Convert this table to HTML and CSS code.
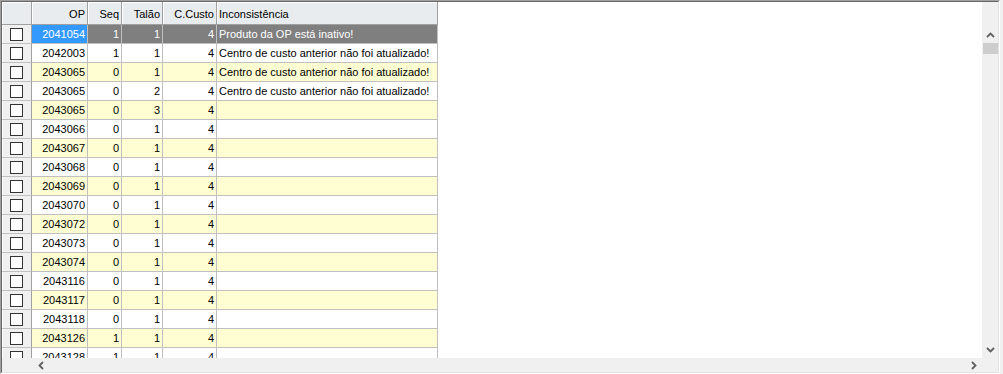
FILE: index.html
```html
<!DOCTYPE html>
<html>
<head>
<meta charset="utf-8">
<link rel="stylesheet" href="styles.css">
</head>
<body>
<div class="frame">
  <div class="inner">
    <div class="viewport">
      <table class="grid">
        <colgroup>
          <col class="c-chk"><col class="c-op"><col class="c-seq"><col class="c-tal"><col class="c-cc"><col class="c-inc">
        </colgroup>
        <thead>
          <tr>
            <th class="ind"></th><th class="num">OP</th><th class="num">Seq</th><th class="num">Talão</th><th class="num">C.Custo</th><th class="txt">Inconsistência</th>
          </tr>
        </thead>
        <tbody>
          <tr class="sel"><td class="ind"><span class="cb"></span></td><td class="num cur">2041054</td><td class="num">1</td><td class="num">1</td><td class="num">4</td><td class="txt">Produto da OP está inativo!</td></tr>
          <tr><td class="ind"><span class="cb"></span></td><td class="num">2042003</td><td class="num">1</td><td class="num">1</td><td class="num">4</td><td class="txt">Centro de custo anterior não foi atualizado!</td></tr>
          <tr class="alt"><td class="ind"><span class="cb"></span></td><td class="num">2043065</td><td class="num">0</td><td class="num">1</td><td class="num">4</td><td class="txt">Centro de custo anterior não foi atualizado!</td></tr>
          <tr><td class="ind"><span class="cb"></span></td><td class="num">2043065</td><td class="num">0</td><td class="num">2</td><td class="num">4</td><td class="txt">Centro de custo anterior não foi atualizado!</td></tr>
          <tr class="alt"><td class="ind"><span class="cb"></span></td><td class="num">2043065</td><td class="num">0</td><td class="num">3</td><td class="num">4</td><td class="txt"></td></tr>
          <tr><td class="ind"><span class="cb"></span></td><td class="num">2043066</td><td class="num">0</td><td class="num">1</td><td class="num">4</td><td class="txt"></td></tr>
          <tr class="alt"><td class="ind"><span class="cb"></span></td><td class="num">2043067</td><td class="num">0</td><td class="num">1</td><td class="num">4</td><td class="txt"></td></tr>
          <tr><td class="ind"><span class="cb"></span></td><td class="num">2043068</td><td class="num">0</td><td class="num">1</td><td class="num">4</td><td class="txt"></td></tr>
          <tr class="alt"><td class="ind"><span class="cb"></span></td><td class="num">2043069</td><td class="num">0</td><td class="num">1</td><td class="num">4</td><td class="txt"></td></tr>
          <tr><td class="ind"><span class="cb"></span></td><td class="num">2043070</td><td class="num">0</td><td class="num">1</td><td class="num">4</td><td class="txt"></td></tr>
          <tr class="alt"><td class="ind"><span class="cb"></span></td><td class="num">2043072</td><td class="num">0</td><td class="num">1</td><td class="num">4</td><td class="txt"></td></tr>
          <tr><td class="ind"><span class="cb"></span></td><td class="num">2043073</td><td class="num">0</td><td class="num">1</td><td class="num">4</td><td class="txt"></td></tr>
          <tr class="alt"><td class="ind"><span class="cb"></span></td><td class="num">2043074</td><td class="num">0</td><td class="num">1</td><td class="num">4</td><td class="txt"></td></tr>
          <tr><td class="ind"><span class="cb"></span></td><td class="num">2043116</td><td class="num">0</td><td class="num">1</td><td class="num">4</td><td class="txt"></td></tr>
          <tr class="alt"><td class="ind"><span class="cb"></span></td><td class="num">2043117</td><td class="num">0</td><td class="num">1</td><td class="num">4</td><td class="txt"></td></tr>
          <tr><td class="ind"><span class="cb"></span></td><td class="num">2043118</td><td class="num">0</td><td class="num">1</td><td class="num">4</td><td class="txt"></td></tr>
          <tr class="alt"><td class="ind"><span class="cb"></span></td><td class="num">2043126</td><td class="num">1</td><td class="num">1</td><td class="num">4</td><td class="txt"></td></tr>
          <tr><td class="ind"><span class="cb"></span></td><td class="num">2043128</td><td class="num">1</td><td class="num">1</td><td class="num">4</td><td class="txt"></td></tr>
        </tbody>
      </table>
    </div>
    <div class="vbar">
      <div class="vtop"></div>
      <div class="btn"><svg width="9" height="6" viewBox="0 0 9 6"><polyline points="1,5 4.5,1.5 8,5" fill="none" stroke="#606060" stroke-width="1.8"/></svg></div>
      <div class="vthumb"></div>
      <div class="track"></div>
      <div class="btn"><svg width="9" height="6" viewBox="0 0 9 6"><polyline points="1,1 4.5,4.5 8,1" fill="none" stroke="#606060" stroke-width="1.8"/></svg></div>
      <div class="corner"></div>
    </div>
    <div class="hbar">
      <div class="hleft"></div>
      <div class="hbtn"><svg width="6" height="9" viewBox="0 0 6 9"><polyline points="5,1 1.5,4.5 5,8" fill="none" stroke="#606060" stroke-width="1.8"/></svg></div>
      <div class="track"></div>
      <div class="hbtn"><svg width="6" height="9" viewBox="0 0 6 9"><polyline points="1,1 4.5,4.5 1,8" fill="none" stroke="#606060" stroke-width="1.8"/></svg></div>
    </div>
  </div>
</div>
</body>
</html>
```
FILE: styles.css
```css
html, body {
  margin: 0;
  padding: 0;
}
body {
  background: #f0f0f0;
  font-family: "Liberation Sans", Arial, sans-serif;
  font-size: 11px;
  color: #000;
}
.frame {
  width: 1000px;
  height: 374px;
  box-sizing: border-box;
  border: 1px solid;
  border-color: #a0a0a0 #ffffff #ffffff #a0a0a0;
}
.inner {
  height: 100%;
  box-sizing: border-box;
  border: 1px solid;
  border-color: #696969 #e3e3e3 #e3e3e3 #696969;
  background: #f0f0f0;
  display: grid;
  grid-template-columns: 1fr 16px;
  grid-template-rows: 356px 1fr;
}
.viewport {
  background: #fff;
  overflow: hidden;
  grid-column: 1;
  grid-row: 1;
}
.grid {
  border-collapse: separate;
  border-spacing: 0;
  table-layout: fixed;
  width: 436px;
}
.c-chk { width: 30px; }
.c-op { width: 56px; }
.c-seq { width: 34px; }
.c-tal { width: 41px; }
.c-cc { width: 54px; }
.c-inc { width: 221px; }

th {
  height: 23px;
  padding: 2px 2px 0 2px;
  background: #e9ecef;
  border-right: 1px solid #a0a0a0;
  border-bottom: 1px solid #a0a0a0;
  box-shadow: inset 1px 1px 0 #ffffff;
  font-weight: normal;
  white-space: nowrap;
  overflow: hidden;
  box-sizing: border-box;
}
th.num { text-align: right; }
th.txt { text-align: left; }

td {
  height: 18px;
  padding: 0 2px;
  border-right: 1px solid #c0c0c0;
  border-bottom: 1px solid #c0c0c0;
  white-space: nowrap;
  overflow: hidden;
  line-height: 18px;
}
td.num { text-align: right; }
td.txt { text-align: left; }
tr.alt td { background: #fffed2; }

td.ind, tr.alt td.ind {
  background: #f0f0f0;
  border-right: 1px solid #a0a0a0;
  border-bottom: 1px solid #c0c0c0;
  box-shadow: inset 1px 0 0 #ffffff;
  text-align: center;
  padding: 0;
}
.cb {
  display: inline-block;
  width: 11px;
  height: 11px;
  border: 1px solid #333333;
  background: #fff;
  vertical-align: middle;
  margin-top: -2px;
}
tr.sel td { background: #7f7f7f; color: #fff; }
tr.sel td.cur { background: #3399ff; color: #fff; }
tr.sel td.ind { background: #f0f0f0; }

.vbar {
  grid-column: 2;
  grid-row: 1 / 3;
  display: flex;
  flex-direction: column;
}
.vtop { height: 24px; }
.btn {
  height: 17px;
  display: flex;
  align-items: center;
  justify-content: center;
}
.vthumb {
  height: 11px;
  margin: 0 0 0 1px;
  background: #cdcdcd;
}
.track { flex: 1; }
.corner { height: 14px; }

.hbar {
  grid-column: 1;
  grid-row: 2;
  display: flex;
  align-items: stretch;
}
.hleft { width: 30px; }
.hbtn {
  width: 17px;
  display: flex;
  align-items: center;
  justify-content: center;
}
```
